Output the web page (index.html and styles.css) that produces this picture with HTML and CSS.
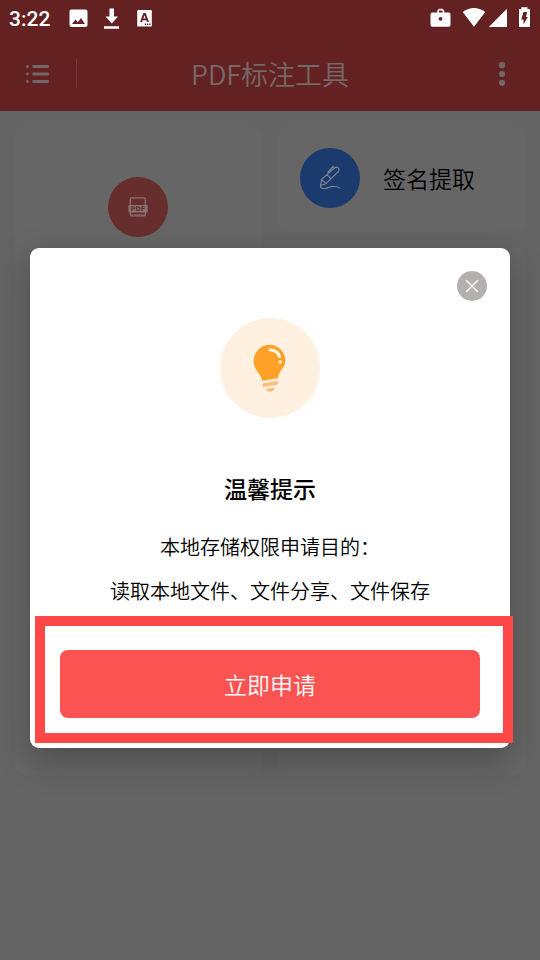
FILE: index.html
```
<!DOCTYPE html>
<html lang="zh-CN">
<head>
<meta charset="utf-8">
<title>PDF标注工具</title>
<link rel="stylesheet" href="styles.css">
</head>
<body>
<div class="app">
  <header class="top">
    <div class="status">
      <span class="time">3:22</span>
      <svg class="status-left" width="90" height="36" viewBox="65 0 90 36">
        <path fill="#fff" fill-rule="evenodd" d="M71.500 9.500h14a2 2 0 0 1 2 2v13.500a2 2 0 0 1-2 2h-14a2 2 0 0 1-2-2v-13.500a2 2 0 0 1 2-2zM72 24h13l-4-6-3.200 4.200-2.300-2.700z"/>
        <path fill="#fff" d="M109.500 8.500h4.500v8h4l-6.200 7-6.300-7h4zM104 26.300h15v2.400h-15z"/>
        <rect x="137.200" y="10" width="14.600" height="16.600" rx="1.200" fill="#fff"/>
        <path fill="none" stroke="#642122" stroke-width="1.900" d="M141 22l3-8h1l3 8M142.200 19.400h4.800"/>
        <path fill="#642122" d="M144.800 23.600h1.300v1.300h-1.300zM147 23.600h1.300v1.300h-1.300zM149.200 23.600h1.300v1.300h-1.300z"/>
      </svg>
      <svg class="status-right" width="110" height="36" viewBox="430 0 110 36">
        <path fill="#fff" fill-rule="evenodd" d="M432.300 12.600h5v-2l1.700-1.900h3.500l1.700 1.900v2h4.500q1.800 0 1.800 1.800v10.400q0 1.900-1.800 1.900h-16.400q-1.800 0-1.800-1.900v-10.400q0-1.800 1.800-1.800zM439 12.600h3.600v-2H439zM440.500 17a1.900 1.900 0 1 0 .01 0z"/>
        <path fill="#fff" d="M462.700 12q11.300-8 22.600 0L474 26.700z"/>
        <path fill="#fff" d="M507 8.700v18.200h-18.200z"/>
        <path fill="#fff" fill-rule="evenodd" d="M519 9h2.300V7.200h6.200V9h2.500v18h-11zM523.500 12h3.600l-1.100 5h1.800l-4.300 7.600v-5h-2.300z"/>
      </svg>
    </div>
    <div class="nav">
      <svg class="list" width="24" height="20" viewBox="0 0 24 20" stroke="#746666" stroke-width="2.800" stroke-linecap="round">
        <path d="M7.500 2.500h14.200M7.500 10h14.200M7.500 17.500h14.200M1.500 2.500h.01M1.500 10h.01M1.500 17.500h.01"/>
      </svg>
      <span class="divider"></span>
      <h1>PDF标注工具</h1>
      <svg class="more" width="8" height="26" viewBox="0 0 8 26" fill="#716565">
        <circle cx="4" cy="4.200" r="3.100"/><circle cx="4" cy="13" r="3.100"/><circle cx="4" cy="21.800" r="3.100"/>
      </svg>
    </div>
  </header>
  <main class="cards">
    <section class="card tall">
      <div class="disc red">
        <svg width="20" height="22" viewBox="0 0 20 22">
          <rect x="2.300" y="1.800" width="15" height="18.200" rx="1.400" fill="none" stroke="#8b7373" stroke-width="1.200"/>
          <rect x=".4" y="9" width="19.200" height="7.500" rx="1" fill="#8b7373"/>
          <text x="10" y="15" class="pdf">PDF</text>
          <path stroke="#8b7373" stroke-width="1" d="M3 19h14"/>
        </svg>
      </div>
    </section>
    <section class="card sign">
      <div class="disc blue">
        <svg width="22" height="26" viewBox="0 0 22 26" fill="none" stroke="#7d8492" stroke-width="1.100" stroke-linecap="round" stroke-linejoin="round">
          <path d="M1.500 20.500l1-6L15.500 3q2.200-1.600 3.700-.2 1.500 1.600.2 3.700L7 18.700zM2.500 14.500l4.500 4.200M8 9.800l4.300 4M9 7L14.200 1.500l1.300 1.300M1.500 20.500q-.6 3 3.500 3 3 0 5.500-1.500 2.500-.9 4.500-.5 3.500-.2 5.500 1.400"/>
        </svg>
      </div>
      <span>签名提取</span>
    </section>
    <section class="card rest"></section>
  </main>
</div>
<div class="dialog">
  <button class="close" aria-label="关闭">
    <svg width="14" height="14" viewBox="0 0 14 14" stroke="#fff" stroke-width="1.400" stroke-linecap="round"><path d="M1.500 1.500l11 11M12.500 1.500l-11 11"/></svg>
  </button>
  <div class="bulb">
    <svg width="36" height="52" viewBox="253 342 36 52">
      <path fill="#ffa126" d="M263 380.700c-.6-7.500-8-9-8.300-19.700a15.800 16.300 0 0 1 31.600 0c0 7-6.700 10-7.500 17.300z"/>
      <path fill="none" stroke="#fff8ee" stroke-width="3" stroke-linecap="round" d="M271 349.800q7.500.6 9.500 6.700"/>
      <circle cx="281.200" cy="362" r="1.800" fill="#fff1df"/>
      <path stroke="#ffbd78" stroke-width="3.600" stroke-linecap="round" d="M265 385.100l12.500-2.200"/>
      <path fill="#ffbd78" d="M266.500 389.300l9-1.700q-.6 4.400-4.500 4.400-2.500 0-4.500-2.700z"/>
    </svg>
  </div>
  <h2>温馨提示</h2>
  <p class="purpose">本地存储权限申请目的：</p>
  <p>读取本地文件、文件分享、文件保存</p>
  <button class="apply">立即申请</button>
</div>
<div class="highlight"></div>
</body>
</html>
```
FILE: styles.css
```
* { box-sizing: border-box; }
body {
  margin: 0;
  width: 540px;
  height: 960px;
  overflow: hidden;
  position: relative;
  background: #646464;
  font-family: "Noto Sans CJK SC", sans-serif;
  font-weight: 350;
  color: #000;
}
h1, h2, p { margin: 0; font-weight: 350; }
button { border: 0; padding: 0; font: inherit; display: flex; align-items: center; justify-content: center; }
svg { display: block; }

.top { height: 111px; background: #642122; }
.status { height: 36px; display: flex; align-items: center; }
.time { width: 56px; margin-left: 9px; padding-top: 1px; font: 500 21px/36px Roboto, sans-serif; color: #fff; }
.status-right { margin-left: auto; }
.nav { height: 75px; display: flex; align-items: center; padding: 0 34px 0 26px; }
.divider { width: 1px; height: 29px; margin-left: 26px; background: #723b3b; }
.nav h1 { flex: 1; margin-left: 114px; font-size: 27px; line-height: 40px; color: #766868; white-space: nowrap; }

.cards {
  display: grid;
  grid-template-columns: 247px 247px;
  grid-template-rows: 106px 527px;
  gap: 16px;
  padding: 15px;
}
.card { background: #666; border-radius: 10px; }
.tall { grid-row: 1 / 3; padding: 51px 1px 0 0; display: flex; justify-content: center; align-items: flex-start; }
.sign { display: flex; align-items: center; padding: 0 0 2px 22px; font-size: 23px; }
.sign span { margin-left: 23px; }
.disc { width: 60px; height: 60px; border-radius: 50%; display: flex; align-items: center; justify-content: center; }
.red { background: #662f2e; }
.blue { background: #1b3a6e; }
.pdf { font: 700 6.500px "DejaVu Sans", sans-serif; fill: #662f2e; text-anchor: middle; }

.dialog {
  position: absolute;
  top: 248px;
  left: 30px;
  width: 480px;
  height: 500px;
  padding: 23px 23px 0 30px;
  background: #fff;
  border-radius: 9px;
  box-shadow: 0 12px 34px rgba(0, 0, 0, .26);
  text-align: center;
  display: flex;
  flex-direction: column;
}
.close { align-self: flex-end; width: 30px; height: 30px; border-radius: 50%; background: #b5b0b0; }
.bulb {
  width: 100px;
  height: 100px;
  margin: 17px 0 0 160.400px;
  border-radius: 50%;
  background: #fff0e0;
  display: flex;
  align-items: center;
  justify-content: center;
}
.dialog h2, .dialog p, .apply { width: 420px; }
.dialog h2 { margin-top: 52px; font-size: 23px; line-height: 36px; font-weight: 500; }
.dialog p { font-size: 20px; line-height: 30px; margin-top: 14px; }
.dialog .purpose { margin-top: 26px; }
.apply {
  height: 68px;
  margin-top: 44px;
  padding-bottom: 1px;
  border-radius: 8px;
  background: #fb5351;
  color: #fff;
  font-size: 23px;
}
.highlight {
  position: absolute;
  left: 35px;
  top: 616px;
  width: 478px;
  height: 127px;
  border: 10px solid #ff4747;
}
```
